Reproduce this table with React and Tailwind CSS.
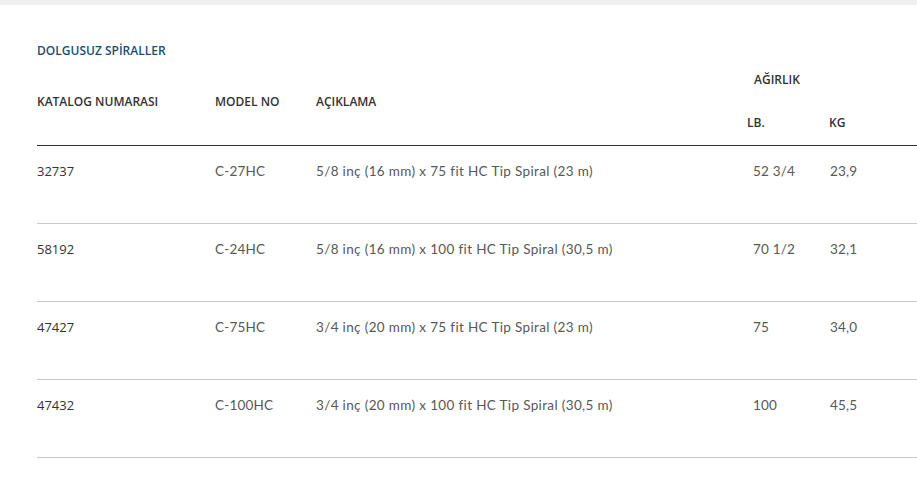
const rows = [
  { cat: '32737', model: 'C-27HC', desc: '5/8 inç (16 mm) x 75 fit HC Tip Spiral (23 m)', lb: '52 3/4', kg: '23,9' },
  { cat: '58192', model: 'C-24HC', desc: '5/8 inç (16 mm) x 100 fit HC Tip Spiral (30,5 m)', lb: '70 1/2', kg: '32,1' },
  { cat: '47427', model: 'C-75HC', desc: '3/4 inç (20 mm) x 75 fit HC Tip Spiral (23 m)', lb: '75', kg: '34,0' },
  { cat: '47432', model: 'C-100HC', desc: '3/4 inç (20 mm) x 100 fit HC Tip Spiral (30,5 m)', lb: '100', kg: '45,5' },
]

const cols = 'grid grid-cols-[178px_101px_433px_80px_1fr]'
const light = "font-['Lato',sans-serif] text-[#585858] text-[13.5px]"

const App = () => {
  return (
    <div className="w-[917px] h-[483px] bg-white overflow-hidden font-['Open_Sans',sans-serif]">
      {/* top strip */}
      <div className="h-[5px] bg-[#efefef]" />

      <div className="pl-[37px]">
        {/* Title */}
        <h2 className="mt-[38px] text-[12px] leading-[16px] font-semibold text-[#1b4f72]">
          DOLGUSUZ SPİRALLER
        </h2>

        {/* Header */}
        <div className={`${cols} mt-[13px] pb-[14px] border-b border-[#333] text-[12px] leading-[16px] font-semibold text-[#333] items-center`}>
          <div className="row-span-2">KATALOG NUMARASI</div>
          <div className="row-span-2">MODEL NO</div>
          <div className="row-span-2">AÇIKLAMA</div>
          <div className="col-span-2 pl-[5px] pb-[27px]">AĞIRLIK</div>
          <div className="-ml-[2px]">LB.</div>
          <div>KG</div>
        </div>

        {/* Rows */}
        {rows.map(r => (
          <div key={r.cat} className={`${cols} pt-[15px] pb-[42px] border-b border-[#c8c8c8] text-[13px] leading-[20px]`}>
            <div className="text-[#333]">{r.cat}</div>
            <div className={`${light} tracking-[0.2px]`}>{r.model}</div>
            <div className={`${light} tracking-[0.35px]`}>{r.desc}</div>
            <div className={`${light} pl-[4px] tracking-[0.2px]`}>{r.lb}</div>
            <div className={`${light} pl-[1px] tracking-[0.2px]`}>{r.kg}</div>
          </div>
        ))}
      </div>
    </div>
  )
}

export default App
